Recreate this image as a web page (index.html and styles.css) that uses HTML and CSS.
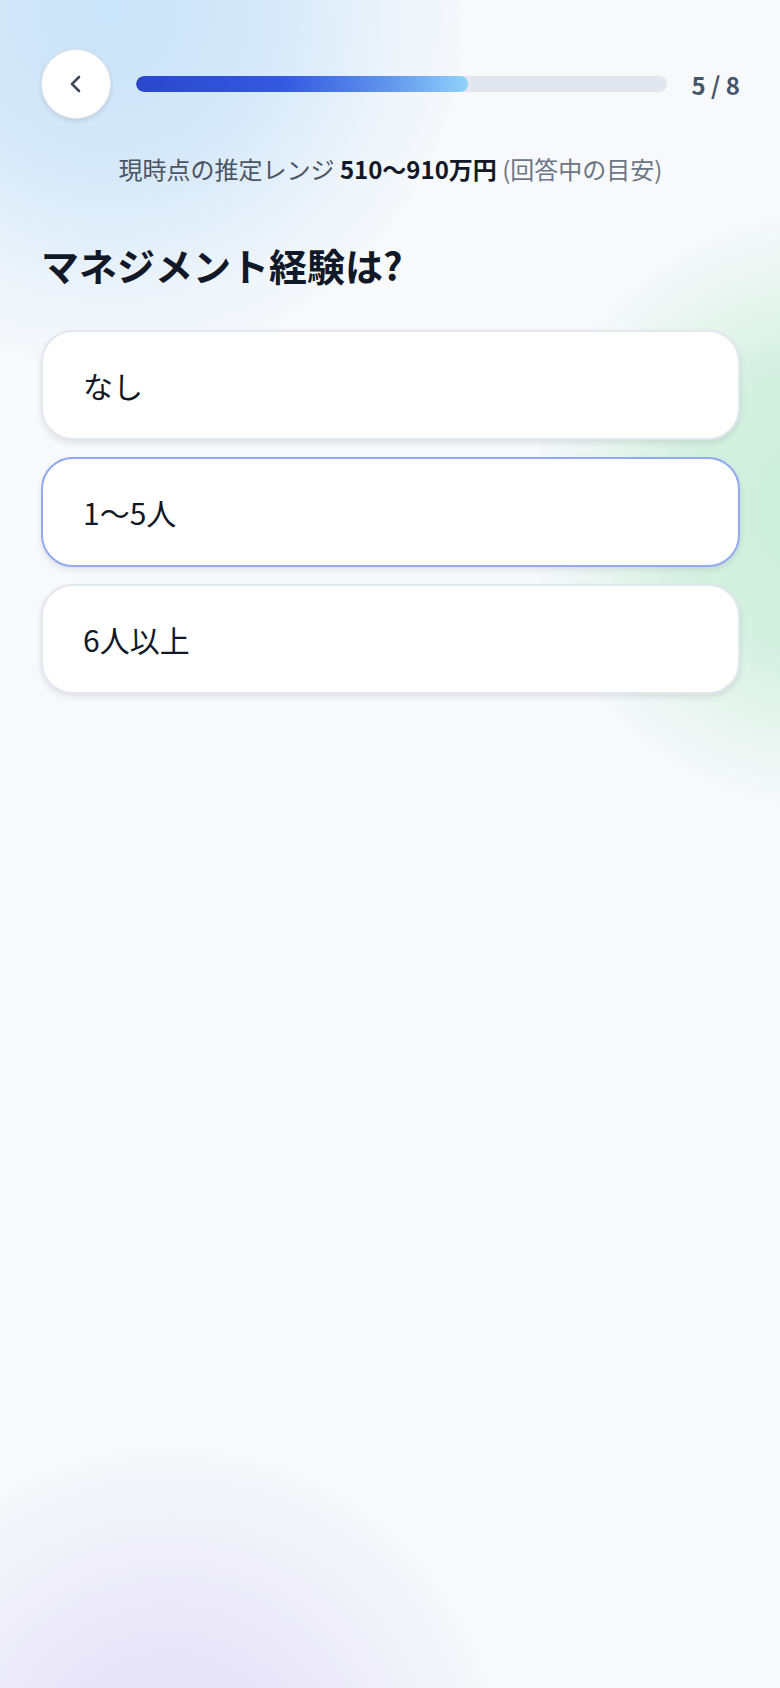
FILE: index.html
```html
<!DOCTYPE html>
<html lang="ja">
<head>
    <meta charset="UTF-8">
    <meta name="viewport" content="width=device-width, initial-scale=1.0">
    <title>マネジメント経験</title>
    <link rel="stylesheet" href="styles.css">
</head>
<body>
    <div class="page">
        <div class="topbar">
            <button class="back" aria-label="戻る">
                <svg width="22" height="22" viewBox="0 0 22 22">
                    <polyline points="14,4 7,11 14,18" fill="none" stroke="#3f4a5c" stroke-width="2.6" stroke-linecap="round" stroke-linejoin="round"/>
                </svg>
            </button>
            <div class="track">
                <div class="fill" style="width: 62.5%"></div>
            </div>
            <div class="count">5 / 8</div>
        </div>

        <p class="estimate">現時点の推定レンジ <b>510〜910万円</b> <span>(回答中の目安)</span></p>

        <h1>マネジメント経験は?</h1>

        <div class="options">
            <button class="option">なし</button>
            <button class="option selected">1〜5人</button>
            <button class="option">6人以上</button>
        </div>
    </div>
</body>
</html>
```

FILE: styles.css
```css
html, body {
    margin: 0;
    padding: 0;
    min-height: 100%;
}
body {
    font-family: "Noto Sans CJK JP", "Noto Sans", sans-serif;
    color: #111827;
    min-height: 1688px;
    background-color: #f7f9fb;
    background-image:
        radial-gradient(circle 360px at 110px 10px, #c9e3f8 0%, rgba(206, 229, 248, 0.8) 45%, rgba(222, 236, 250, 0.4) 80%, rgba(247, 249, 251, 0) 100%),
        radial-gradient(circle 300px at 830px 510px, #cbeedb 0%, rgba(207, 239, 222, 0.85) 50%, rgba(222, 242, 232, 0.45) 82%, rgba(247, 249, 251, 0) 100%),
        radial-gradient(circle 340px at 170px 1780px, #e5e0f8 0%, rgba(230, 226, 248, 0.8) 45%, rgba(236, 234, 249, 0.4) 80%, rgba(247, 249, 251, 0) 100%);
    background-repeat: no-repeat;
}
.page {
    padding: 49px 40px 40px 41px;
}
.topbar {
    display: flex;
    align-items: center;
}
.back {
    width: 70px;
    height: 70px;
    flex: none;
    border-radius: 50%;
    border: 1px solid #e3e7ee;
    background: #fff;
    box-shadow: 0 2px 5px rgba(15, 23, 42, 0.12);
    display: flex;
    align-items: center;
    justify-content: center;
    padding: 0;
    cursor: pointer;
}
.track {
    flex: 1;
    height: 16px;
    margin: 0 24px 0 25px;
    background: #e2e7ef;
    border-radius: 8px;
    overflow: hidden;
}
.fill {
    height: 100%;
    border-radius: 8px;
    background: linear-gradient(90deg, #2a47cc 0%, #3559e0 45%, #5f93ec 75%, #90d2fa 100%);
}
.count {
    font-size: 24px;
    font-weight: 700;
    color: #475569;
    white-space: nowrap;
}
.estimate {
    margin: 34px 0 0;
    text-align: center;
    font-size: 24px;
    line-height: 32px;
    color: #4b5565;
}
.estimate b {
    color: #111827;
    font-weight: 700;
}
.estimate span {
    color: #6b7686;
}
h1 {
    margin: 55px 0 0;
    font-size: 38px;
    line-height: 50px;
    font-weight: 700;
    color: #111827;
}
.options {
    display: flex;
    flex-direction: column;
    gap: 17px;
    margin-top: 40px;
}
.option {
    height: 110px;
    padding: 0 40px;
    text-align: left;
    font-family: inherit;
    font-size: 30px;
    color: #111827;
    background: #fff;
    border: 2px solid #e3e7ee;
    border-radius: 32px;
    box-shadow: 0 3px 6px rgba(15, 23, 42, 0.1);
    cursor: pointer;
}
.option.selected {
    border-color: #93a9f1;
}
```
